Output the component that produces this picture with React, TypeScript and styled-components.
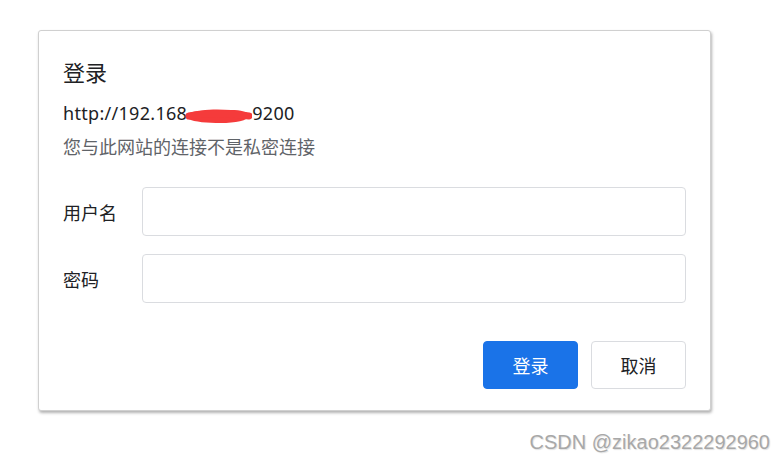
import React from "react";
import styled, { createGlobalStyle } from "styled-components";

const Global = createGlobalStyle`
  html, body { margin: 0; padding: 0; background: #ffffff; }
  body { font-family: "Segoe UI", "Noto Sans", "Noto Sans CJK SC", sans-serif; }
  * { box-sizing: border-box; }
`;

const Page = styled.div`
  width: 783px;
  height: 459px;
  position: relative;
  padding: 30px 0 0 38px;
`;

const Dialog = styled.div`
  width: 673px;
  height: 381px;
  background: #fff;
  border: 1px solid #d0d0d0;
  border-radius: 3px;
  box-shadow: 1px 2px 3px rgba(0, 0, 0, 0.3);
  padding: 24px 24px 0 24px;
  display: flex;
  flex-direction: column;
  font-family: "Noto Sans", "Noto Sans CJK SC", sans-serif;
`;

const Title = styled.div`
  font-size: 22px;
  line-height: 32px;
  color: #202124;
  font-family: "Noto Sans CJK SC", sans-serif;
`;

const Url = styled.div`
  margin-top: 14px;
  font-size: 18px;
  line-height: 24px;
  letter-spacing: 0.3px;
  color: #202124;
  display: flex;
  align-items: center;
  white-space: nowrap;
`;

const Scribble = styled.svg`
  width: 67px;
  height: 24px;
  display: block;
  flex: none;
  margin-left: -2px;
`;

const Sub = styled.div`
  margin-top: 9px;
  font-size: 18px;
  line-height: 24px;
  color: #5f6368;
  font-family: "Noto Sans CJK SC", sans-serif;
`;

const Form = styled.div`
  margin-top: 29px;
  display: flex;
  flex-direction: column;
  gap: 18px;
`;

const Row = styled.div`
  display: flex;
  align-items: center;
`;

const Label = styled.div`
  width: 79px;
  flex: none;
  font-size: 18px;
  color: #202124;
  font-family: "Noto Sans CJK SC", sans-serif;
`;

const Input = styled.div`
  flex: 1;
  height: 49px;
  border: 1px solid #dadce0;
  border-radius: 4px;
  background: #fff;
`;

const Actions = styled.div`
  margin-top: 38px;
  display: flex;
  justify-content: flex-end;
  gap: 13px;
`;

const Button = styled.div<{ $primary?: boolean }>`
  width: 95px;
  height: 48px;
  border-radius: 4px;
  display: flex;
  align-items: center;
  justify-content: center;
  font-size: 18px;
  font-family: "Noto Sans CJK SC", sans-serif;
  background: ${(p) => (p.$primary ? "#1a73e8" : "#ffffff")};
  color: ${(p) => (p.$primary ? "#ffffff" : "#202124")};
  border: 1px solid ${(p) => (p.$primary ? "#1a73e8" : "#dadce0")};
`;

const Watermark = styled.div`
  position: absolute;
  right: 13px;
  bottom: 6px;
  font-family: "Liberation Sans", Arial, sans-serif;
  font-size: 20px;
  line-height: 22px;
  color: #a8a8a8;
  text-shadow: 1px 1px 1px rgba(0, 0, 0, 0.12);
`;

export default function App() {
  return (
    <Page>
      <Global />
      <Dialog>
        <Title>登录</Title>
        <Url>
          http://192.168
          <Scribble viewBox="0 0 67 24">
            <path
              d="M2 13 C 14 8, 32 8, 46 9 C 56 9, 63 11, 65 14 C 63 20, 50 22, 36 22 C 22 22, 10 21, 3 18 C 1 16, 1 14, 2 13 Z"
              fill="#f53b3b"
            />
            <path d="M4 15 C 20 12, 44 12, 64 15" stroke="#f53b3b" strokeWidth="7" strokeLinecap="round" fill="none" />
          </Scribble>
          9200
        </Url>
        <Sub>您与此网站的连接不是私密连接</Sub>
        <Form>
          <Row>
            <Label>用户名</Label>
            <Input />
          </Row>
          <Row>
            <Label>密码</Label>
            <Input />
          </Row>
        </Form>
        <Actions>
          <Button $primary>登录</Button>
          <Button>取消</Button>
        </Actions>
      </Dialog>
      <Watermark>CSDN @zikao2322292960</Watermark>
    </Page>
  );
}
